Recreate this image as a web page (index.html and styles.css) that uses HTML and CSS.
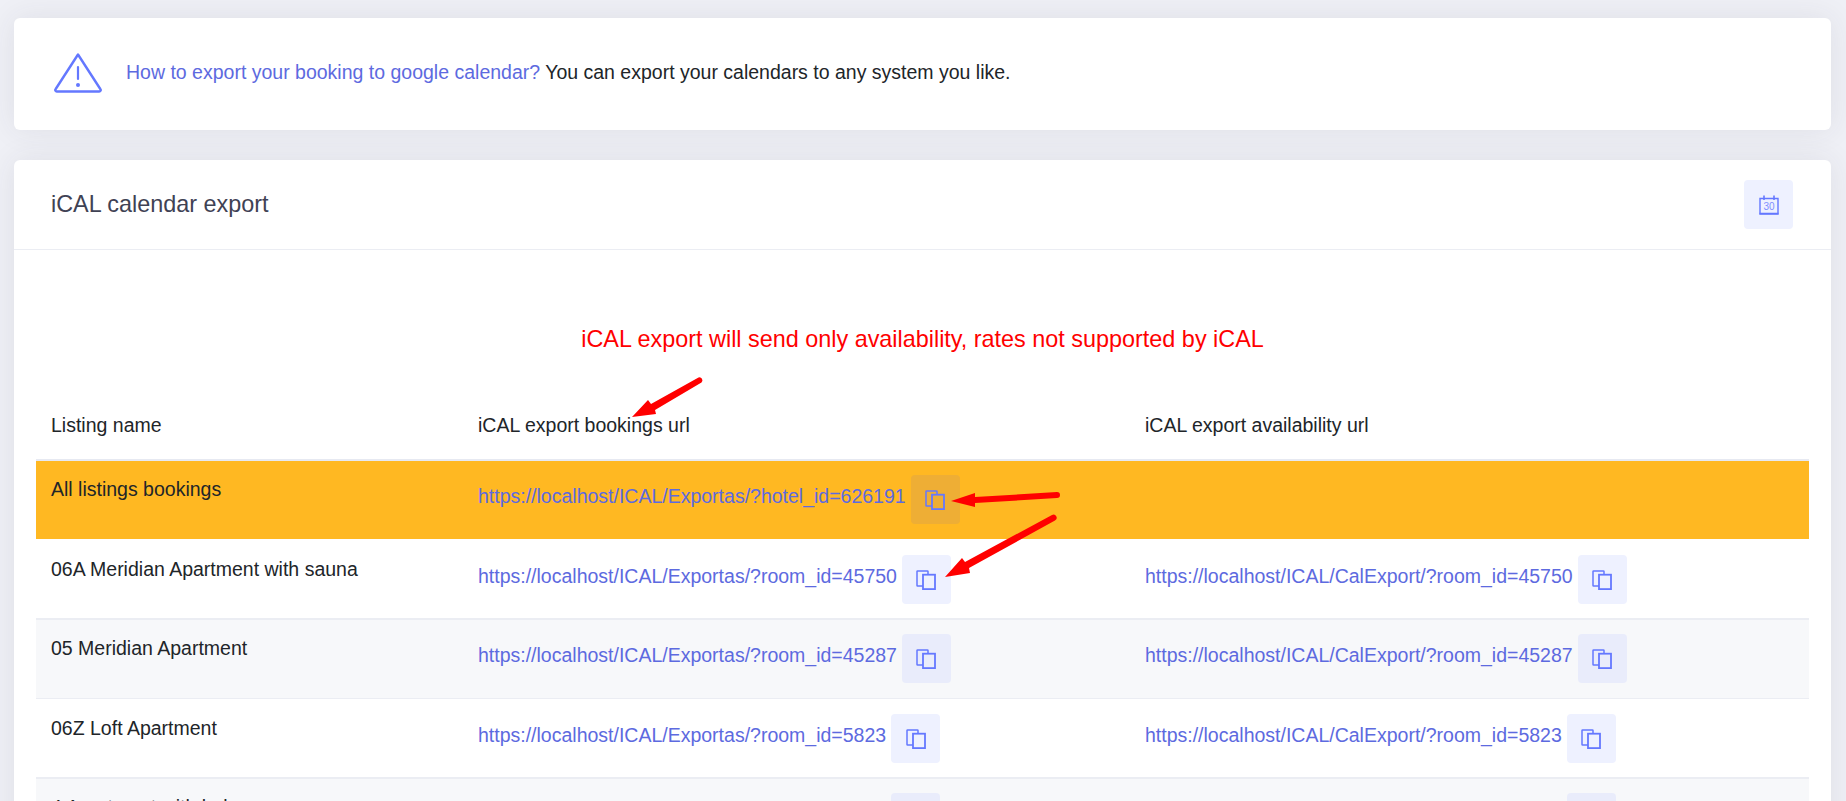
FILE: index.html
```html
<!DOCTYPE html>
<html lang="en">
<head>
<meta charset="utf-8">
<title>iCAL calendar export</title>
<link rel="stylesheet" href="styles.css">
</head>
<body>
<svg class="defs" width="0" height="0" aria-hidden="true">
  <symbol id="copy" viewBox="0 0 20 20">
    <path d="M7 16H1.6a.6.6 0 0 1-.6-.6V1.6a.6.6 0 0 1 .6-.6h9.8a.6.6 0 0 1 .6.6V4.5" fill="none" stroke="#6478ff" stroke-width="1.5"/>
    <rect x="7" y="4.7" width="12" height="14.4" fill="none" stroke="#6478ff" stroke-width="1.8"/>
  </symbol>
</svg>
<main class="page">
  <section class="card alert">
    <svg class="warn" viewBox="0 0 48 40" width="48" height="40" aria-hidden="true">
      <path d="M24 1.5 L46.3 36 a1.5 1.5 0 0 1-1.3 2.5 H3 a1.5 1.5 0 0 1-1.3-2.5 Z" fill="none" stroke="#6478ff" stroke-width="2.4" stroke-linejoin="round"/>
      <path d="M24 14v12" stroke="#6478ff" stroke-width="2.2" stroke-linecap="round"/>
      <circle cx="24" cy="32" r="2" fill="#6478ff"/>
    </svg>
    <p class="alert-text"><a href="#">How to export your booking to google calendar?</a> You can export your calendars to any system you like.</p>
  </section>
  <section class="card panel">
    <header class="panel-head">
      <h2>iCAL calendar export</h2>
      <button class="icon-btn" type="button" aria-label="Calendar">
        <svg viewBox="0 0 20 20" width="20" height="20" aria-hidden="true">
          <path d="M1 3.5h18v15.5h-18z" fill="none" stroke="#6478ff" stroke-width="1.4"/>
          <path d="M0.5 18.5h19M5 0.5v4.5M15 0.5v4.5" stroke="#6478ff" stroke-width="1.6"/>
          <text x="10" y="14.5" text-anchor="middle" class="cal-num">30</text>
        </svg>
      </button>
    </header>
    <div class="panel-body">
      <p class="notice">iCAL export will send only availability, rates not supported by iCAL</p>
      <table>
        <thead>
          <tr><th class="c1">Listing name</th><th class="c2">iCAL export bookings url</th><th>iCAL export availability url</th></tr>
        </thead>
        <tbody>
          <tr class="gold">
            <td>All listings bookings</td>
            <td><div class="url"><a href="#">https://localhost/ICAL/Exportas/?hotel_id=626191</a><button class="icon-btn" type="button" aria-label="Copy"><svg width="20" height="20"><use href="#copy"/></svg></button></div></td>
            <td></td>
          </tr>
          <tr class="row-a">
            <td>06A Meridian Apartment with sauna</td>
            <td><div class="url"><a href="#">https://localhost/ICAL/Exportas/?room_id=45750</a><button class="icon-btn" type="button" aria-label="Copy"><svg width="20" height="20"><use href="#copy"/></svg></button></div></td>
            <td><div class="url"><a href="#">https://localhost/ICAL/CalExport/?room_id=45750</a><button class="icon-btn" type="button" aria-label="Copy"><svg width="20" height="20"><use href="#copy"/></svg></button></div></td>
          </tr>
          <tr class="alt">
            <td>05 Meridian Apartment</td>
            <td><div class="url"><a href="#">https://localhost/ICAL/Exportas/?room_id=45287</a><button class="icon-btn" type="button" aria-label="Copy"><svg width="20" height="20"><use href="#copy"/></svg></button></div></td>
            <td><div class="url"><a href="#">https://localhost/ICAL/CalExport/?room_id=45287</a><button class="icon-btn" type="button" aria-label="Copy"><svg width="20" height="20"><use href="#copy"/></svg></button></div></td>
          </tr>
          <tr class="row-b">
            <td>06Z Loft Apartment</td>
            <td><div class="url"><a href="#">https://localhost/ICAL/Exportas/?room_id=5823</a><button class="icon-btn" type="button" aria-label="Copy"><svg width="20" height="20"><use href="#copy"/></svg></button></div></td>
            <td><div class="url"><a href="#">https://localhost/ICAL/CalExport/?room_id=5823</a><button class="icon-btn" type="button" aria-label="Copy"><svg width="20" height="20"><use href="#copy"/></svg></button></div></td>
          </tr>
          <tr class="alt">
            <td>4 Apartment with balcony</td>
            <td><div class="url"><a href="#">https://localhost/ICAL/Exportas/?room_id=5824</a><button class="icon-btn" type="button" aria-label="Copy"><svg width="20" height="20"><use href="#copy"/></svg></button></div></td>
            <td><div class="url"><a href="#">https://localhost/ICAL/CalExport/?room_id=5824</a><button class="icon-btn" type="button" aria-label="Copy"><svg width="20" height="20"><use href="#copy"/></svg></button></div></td>
          </tr>
        </tbody>
      </table>
    </div>
  </section>
</main>
<svg class="arrows" width="1846" height="801" viewBox="0 0 1846 801" aria-hidden="true">
  <g fill="#ff0000">
    <path d="M698.5 377.5 a3 3 0 0 1 3 5 L655 410 L656 414 L632 417 L648 400 L651 404 Z"/>
    <path d="M1057 492 a3 3 0 0 1 0 6 L975 503 L975 507 L951 501 L975 493 L975 497 Z"/>
    <path d="M1052 515 a3 3 0 0 1 3 5.5 L969 568 L970 573 L945 577 L962 558 L965 562 Z"/>
  </g>
</svg>
</body>
</html>
```
FILE: styles.css
```css
* { box-sizing: border-box; }
body {
  margin: 0;
  height: 801px;
  overflow: hidden;
  background: #eff0f6;
  font-family: "Liberation Sans", Arial, sans-serif;
  font-size: 19.5px;
  line-height: 29.25px;
  color: #212529;
  position: relative;
}
.defs { position: absolute; }
.page {
  display: flex;
  flex-direction: column;
  gap: 30px;
  padding: 18px 15px 0 14px;
}
.card {
  background: #fff;
  border-radius: 6px;
  box-shadow: 0 0 30px rgba(50, 50, 70, 0.09);
}
.alert {
  display: flex;
  align-items: center;
  height: 112px;
  padding: 0 37px 0 40px;
  gap: 24px;
}
.warn { flex: none; margin-top: -3px; }
.alert-text { margin: -3px 0 0; }
a { color: #5d6ae0; text-decoration: none; }
.panel-head {
  display: flex;
  align-items: center;
  justify-content: space-between;
  height: 90px;
  padding: 0 38px 0 37px;
  border-bottom: 1px solid #ebedf3;
}
.panel-head h2 {
  margin: 0;
  font-size: 23.4px;
  font-weight: 400;
  color: #3f4254;
}
.icon-btn {
  flex: none;
  display: flex;
  align-items: center;
  justify-content: center;
  width: 49px;
  height: 49px;
  padding: 0;
  border: 0;
  border-radius: 4px;
  background: #eef1ff;
}
.panel-body { padding: 72px 22px 0; }
.notice {
  margin: 0;
  text-align: center;
  color: #ff0000;
  font-size: 23.4px;
  line-height: 35px;
}
table {
  width: 100%;
  border-collapse: separate;
  border-spacing: 0;
  table-layout: fixed;
  margin-top: 24px;
}
th, td {
  text-align: left;
  font-weight: 400;
  vertical-align: top;
  padding: 14px 15px 0;
}
th { height: 80px; padding-top: 30px; border-bottom: 2px solid #e6e9f2; }
.c1 { width: 427px; }
.c2 { width: 667px; }
td { height: 79px; border-bottom: 1px solid #ebedf3; }
.url { display: flex; align-items: center; gap: 5px; height: 49px; }
.url a { margin-bottom: 6px; }
.gold { background: #ffb822; }
.gold td { border-bottom: 0; height: 78px; }
.gold .icon-btn { background: #eeae35; }
.row-a td { height: 81px; padding-top: 16px; border-bottom-width: 2px; }
.row-b td { height: 80px; padding-top: 15px; border-bottom-width: 2px; }
.alt { background: #f7f8fa; }
.alt .icon-btn { background: #e9ecfb; }
.cal-num { font-family: "Liberation Sans", Arial, sans-serif; font-size: 10px; fill: #7f8eff; }
.arrows { position: absolute; left: 0; top: 0; pointer-events: none; }
```
